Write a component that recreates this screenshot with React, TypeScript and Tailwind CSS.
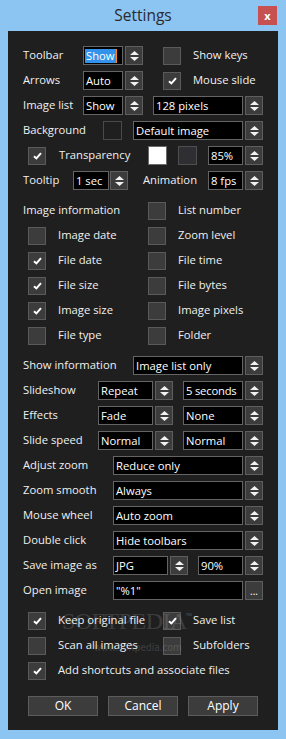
import React from "react";

const FONT = { fontFamily: '"Open Sans", "Noto Sans", sans-serif' };

function Updown() {
  return (
    <svg width="9" height="10" viewBox="0 0 9 10">
      <polygon points="0,4 4.5,0 9,4" fill="#f2f2f2" />
      <polygon points="0,6 4.5,10 9,6" fill="#f2f2f2" />
    </svg>
  );
}

function Spin(props: { className?: string }) {
  return (
    <div
      className={
        "flex h-[19px] w-[18px] shrink-0 items-center justify-center border border-[#5e5e5e] bg-[#3c3c3c] " +
        (props.className || "")
      }
    >
      <Updown />
    </div>
  );
}

function Field(props: { className: string; children?: React.ReactNode }) {
  return (
    <div
      className={
        "h-[19px] shrink-0 overflow-hidden whitespace-nowrap border border-[#646464] bg-black pl-[2px] leading-[17px] text-white " +
        props.className
      }
    >
      {props.children}
    </div>
  );
}

function Check(props: { on?: boolean; className?: string }) {
  return (
    <div
      className={
        "flex h-[18px] w-[18px] shrink-0 items-center justify-center border border-[#5a5a5a] bg-[#3c3c3c] " +
        (props.className || "")
      }
    >
      {props.on && (
        <svg width="9" height="8" viewBox="0 0 9 8">
          <path d="M1 4.2 L3.4 6.4 L8 1.2" stroke="#ffffff" strokeWidth="2" fill="none" />
        </svg>
      )}
    </div>
  );
}

function Row(props: { className?: string; children: React.ReactNode }) {
  return (
    <div className={"flex h-[25px] items-center " + (props.className || "pl-[15px]")}>
      {props.children}
    </div>
  );
}

function InfoRow(props: { left: string; leftOn?: boolean; right: string }) {
  return (
    <Row className="pl-[20px]">
      <Check on={props.leftOn} />
      <span className="ml-[12px] w-[90px] whitespace-nowrap">{props.left}</span>
      <Check />
      <span className="ml-[12px] whitespace-nowrap">{props.right}</span>
    </Row>
  );
}

function WideRow(props: { label: string; value: string; last?: React.ReactNode }) {
  return (
    <Row>
      <span className="w-[90px] whitespace-nowrap">{props.label}</span>
      <Field className="w-[130px]">{props.value}</Field>
      {props.last || <Spin className="ml-[2px]" />}
    </Row>
  );
}

function Button(props: { label: string }) {
  return (
    <div className="flex h-[20px] w-[70px] items-center justify-center border border-[#5c5c5c] bg-[#3c3c3c] text-[12px] text-white">
      {props.label}
    </div>
  );
}

export default function App() {
  return (
    <div className="h-[739px] w-[286px] bg-[#8cc4f2] text-[11.25px] text-[#f0f0f0]" style={FONT}>
      <div className="relative flex h-[31px] items-center justify-center">
        <span className="text-[15.5px] text-[#2a2a2a]">Settings</span>
        <div className="absolute right-[9px] top-[6px] flex h-[19px] w-[19px] items-center justify-center bg-[#c75050]">
          <span className="text-[11px] font-bold leading-none text-white">x</span>
        </div>
      </div>

      <div className="relative mx-[8px] h-[699px] bg-[#1f1f1f] pt-[12px]">
        <Row>
          <span className="w-[60px]">Toolbar</span>
          <div className="flex h-[19px] w-[40px] items-center border border-[#646464] bg-black pl-[1px]">
            <span className="bg-[#3392ea] px-[1px] leading-[14px] text-white">Show</span>
            <span className="h-[14px] w-[1px] bg-[#ff8a1c]" />
          </div>
          <Spin className="ml-[2px]" />
          <Check className="ml-[20px]" />
          <span className="ml-[12px]">Show keys</span>
        </Row>
        <Row>
          <span className="w-[60px]">Arrows</span>
          <Field className="w-[40px]">Auto</Field>
          <Spin className="ml-[2px]" />
          <Check on className="ml-[20px]" />
          <span className="ml-[12px]">Mouse slide</span>
        </Row>
        <Row>
          <span className="w-[60px] whitespace-nowrap">Image list</span>
          <Field className="w-[40px]">Show</Field>
          <Spin className="ml-[2px]" />
          <Field className="ml-[10px] w-[90px]">128 pixels</Field>
          <Spin className="ml-[2px]" />
        </Row>
        <Row>
          <span className="w-[80px]">Background</span>
          <div className="h-[19px] w-[19px] border border-[#4a4a4a] bg-[#1f1f1f]" />
          <Field className="ml-[11px] w-[110px]">Default image</Field>
          <Spin className="ml-[2px]" />
        </Row>
        <Row className="pl-[20px]">
          <Check on />
          <span className="ml-[13px] w-[89px]">Transparency</span>
          <div className="h-[19px] w-[19px] border border-[#6a6a6a] bg-white" />
          <div className="ml-[11px] h-[19px] w-[19px] border border-[#4e4e4e] bg-[#2f2f33]" />
          <Field className="ml-[11px] w-[35px]">85%</Field>
          <Spin className="ml-[2px]" />
        </Row>
        <Row>
          <span className="w-[50px]">Tooltip</span>
          <Field className="w-[36px]">1 sec</Field>
          <Spin className="ml-[1px]" />
          <span className="ml-[15px] w-[65px]">Animation</span>
          <Field className="w-[35px]">8 fps</Field>
          <Spin className="ml-[2px]" />
        </Row>

        <div className="h-[5px]" />
        <Row>
          <span className="w-[125px] whitespace-nowrap">Image information</span>
          <Check />
          <span className="ml-[12px]">List number</span>
        </Row>
        <InfoRow left="Image date" right="Zoom level" />
        <InfoRow left="File date" leftOn right="File time" />
        <InfoRow left="File size" leftOn right="File bytes" />
        <InfoRow left="Image size" leftOn right="Image pixels" />
        <InfoRow left="File type" right="Folder" />

        <div className="h-[5px]" />
        <Row>
          <span className="w-[110px] whitespace-nowrap">Show information</span>
          <Field className="w-[110px]">Image list only</Field>
          <Spin className="ml-[2px]" />
        </Row>
        <Row>
          <span className="w-[75px]">Slideshow</span>
          <Field className="w-[55px]">Repeat</Field>
          <Spin className="ml-[2px]" />
          <Field className="ml-[10px] w-[60px] tracking-[-0.2px]">5 seconds</Field>
          <Spin className="ml-[2px]" />
        </Row>
        <Row>
          <span className="w-[75px]">Effects</span>
          <Field className="w-[55px]">Fade</Field>
          <Spin className="ml-[2px]" />
          <Field className="ml-[10px] w-[60px]">None</Field>
          <Spin className="ml-[2px]" />
        </Row>
        <Row>
          <span className="w-[75px] whitespace-nowrap">Slide speed</span>
          <Field className="w-[55px]">Normal</Field>
          <Spin className="ml-[2px]" />
          <Field className="ml-[10px] w-[60px]">Normal</Field>
          <Spin className="ml-[2px]" />
        </Row>
        <WideRow label="Adjust zoom" value="Reduce only" />
        <WideRow label="Zoom smooth" value="Always" />
        <WideRow label="Mouse wheel" value="Auto zoom" />
        <WideRow label="Double click" value="Hide toolbars" />
        <Row>
          <span className="w-[90px] whitespace-nowrap">Save image as</span>
          <Field className="w-[55px]">JPG</Field>
          <Spin className="ml-[2px]" />
          <Field className="ml-[10px] w-[45px]">90%</Field>
          <Spin className="ml-[2px]" />
        </Row>
        <WideRow
          label="Open image"
          value={'"%1"'}
          last={
            <div className="ml-[2px] flex h-[19px] w-[18px] items-center justify-center border border-[#5e5e5e] bg-[#3c3c3c] text-[10px] leading-none text-white">
              ...
            </div>
          }
        />

        <div className="h-[5px]" />
        <Row className="pl-[20px]">
          <Check on />
          <span className="ml-[12px] w-[105px] whitespace-nowrap">Keep original file</span>
          <Check on />
          <span className="ml-[12px]">Save list</span>
        </Row>
        <Row className="pl-[20px]">
          <Check />
          <span className="ml-[12px] w-[105px] whitespace-nowrap">Scan all images</span>
          <Check />
          <span className="ml-[12px]">Subfolders</span>
        </Row>
        <Row className="pl-[20px]">
          <Check on />
          <span className="ml-[12px] whitespace-nowrap">Add shortcuts and associate files</span>
        </Row>

        <div className="mt-[13px] flex gap-[10px] pl-[20px]">
          <Button label="OK" />
          <Button label="Cancel" />
          <Button label="Apply" />
        </div>

        {/* watermark */}
        <div
          className="pointer-events-none absolute left-[54px] top-[578px] text-[24px] leading-none tracking-[-0.5px] text-white opacity-[0.13]"
          style={{ fontFamily: '"Liberation Serif", serif' }}
        >
          SOFTPEDIA
        </div>
        <div className="pointer-events-none absolute left-[178px] top-[581px] text-[8px] leading-none text-white opacity-[0.2]">
          ™
        </div>
        <div
          className="pointer-events-none absolute left-[86px] top-[612px] text-[10px] leading-none text-white opacity-[0.13]"
          style={{ fontFamily: '"Liberation Sans Narrow", "DejaVu Sans Condensed", sans-serif' }}
        >
          www.softpedia.com
        </div>
      </div>
    </div>
  );
}
